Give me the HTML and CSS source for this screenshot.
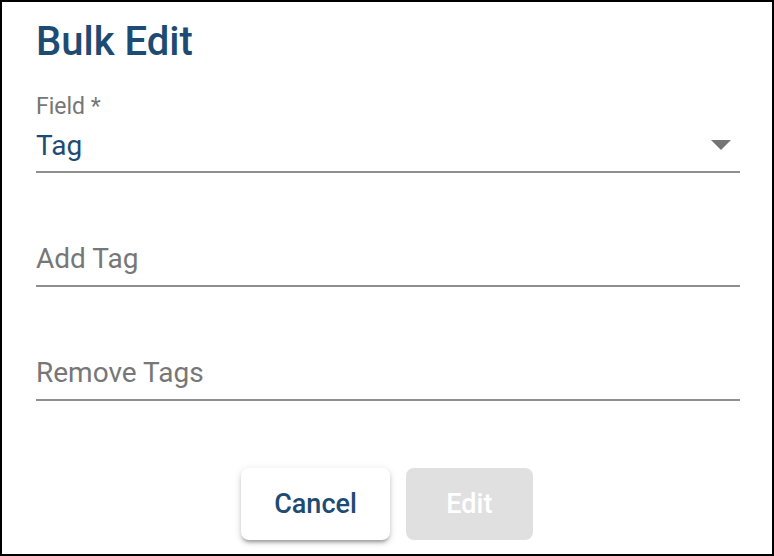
FILE: index.html
```html
<!DOCTYPE html>
<html lang="en">
<head>
  <meta charset="UTF-8" />
  <meta name="viewport" content="width=device-width, initial-scale=1.0"/>
  <title>Bulk Edit</title>
  <link rel="stylesheet" href="styles.css">
</head>
<body>

  <div class="dialog">
    <h2 class="dialog-title">Bulk Edit</h2>

    <div class="field select-field">
      <label class="field-label">Field *</label>
      <div class="select-row">
        <span class="select-value">Tag</span>
        <svg class="select-arrow" width="20" height="10" viewBox="0 0 20 10">
          <polygon points="0,0 20,0 10,10" fill="#757575" />
        </svg>
      </div>
    </div>

    <div class="field text-field">
      <label class="field-placeholder">Add Tag</label>
    </div>

    <div class="field text-field">
      <label class="field-placeholder">Remove Tags</label>
    </div>

    <div class="dialog-actions">
      <button class="btn btn-cancel">Cancel</button>
      <button class="btn btn-edit" disabled>Edit</button>
    </div>
  </div>

</body>
</html>
```

FILE: styles.css
```css
html, body {
  margin: 0;
  padding: 0;
  font-family: Roboto, "Liberation Sans", sans-serif;
  background-color: #ffffff;
}
.dialog {
  box-sizing: border-box;
  width: 774px;
  height: 556px;
  border: 2px solid #000000;
  padding: 0 32px 0 34px;
  display: flex;
  flex-direction: column;
  background: #ffffff;
}
.dialog-title {
  margin: 16px 0 0 0;
  font-size: 40px;
  line-height: 48px;
  font-weight: 500;
  color: #1d4b73;
}
.field {
  border-bottom: 2px solid #8f8f8f;
}
.select-field {
  margin-top: 28px;
  padding-bottom: 9px;
}
.field-label {
  display: block;
  font-size: 23px;
  line-height: 26px;
  color: #767676;
}
.select-row {
  display: flex;
  justify-content: space-between;
  align-items: center;
  margin-top: 10px;
  height: 32px;
}
.select-value {
  font-size: 28px;
  line-height: 32px;
  color: #1d4b73;
}
.select-arrow {
  margin-right: 9px;
  margin-bottom: 3px;
}
.text-field {
  margin-top: 70px;
  padding-bottom: 10px;
}
.field-placeholder {
  display: block;
  font-size: 28px;
  line-height: 32px;
  color: #777777;
}
.dialog-actions {
  display: flex;
  justify-content: center;
  gap: 16px;
  margin-top: 67px;
  margin-left: -2px;
}
.btn {
  height: 72px;
  min-width: 127px;
  padding: 0 33px;
  border: none;
  border-radius: 8px;
  font-family: Roboto, "Liberation Sans", sans-serif;
  font-size: 27px;
  font-weight: 500;
  cursor: pointer;
}
.btn-cancel {
  background: #ffffff;
  color: #1d4b73;
  box-shadow: 0 4px 3px -2px rgba(0, 0, 0, 0.2), 0 3px 4px 0 rgba(0, 0, 0, 0.14), 0 2px 8px 0 rgba(0, 0, 0, 0.12);
}
.btn-edit {
  background: #e0e0e0;
  color: #ffffff;
  cursor: default;
}
```
